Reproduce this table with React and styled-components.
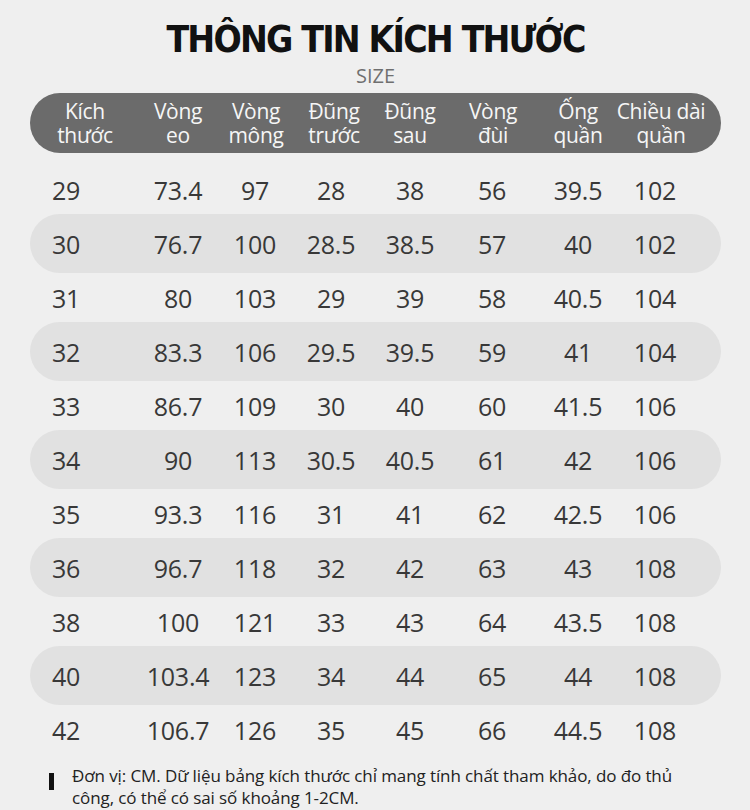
import React from "react";
import styled, { createGlobalStyle } from "styled-components";

const GlobalStyle = createGlobalStyle`
  html, body {
    margin: 0;
    padding: 0;
    background: #efefef;
  }
  body {
    font-family: "Open Sans", "Noto Sans", sans-serif;
    color: #333;
  }
`;

const HEAD_COLS = "93px 78px 78px 76px 83px 85px 83px 60px";
const BODY_COLS = "112px 77px 76px 79px 82px 86px 77px 66px";

const headers = [
  ["Kích", "thước"],
  ["Vòng", "eo"],
  ["Vòng", "mông"],
  ["Đũng", "trước"],
  ["Đũng", "sau"],
  ["Vòng", "đùi"],
  ["Ống", "quần"],
  ["Chiều dài", "quần"],
];

const rows = [
  ["29", "73.4", "97", "28", "38", "56", "39.5", "102"],
  ["30", "76.7", "100", "28.5", "38.5", "57", "40", "102"],
  ["31", "80", "103", "29", "39", "58", "40.5", "104"],
  ["32", "83.3", "106", "29.5", "39.5", "59", "41", "104"],
  ["33", "86.7", "109", "30", "40", "60", "41.5", "106"],
  ["34", "90", "113", "30.5", "40.5", "61", "42", "106"],
  ["35", "93.3", "116", "31", "41", "62", "42.5", "106"],
  ["36", "96.7", "118", "32", "42", "63", "43", "108"],
  ["38", "100", "121", "33", "43", "64", "43.5", "108"],
  ["40", "103.4", "123", "34", "44", "65", "44", "108"],
  ["42", "106.7", "126", "35", "45", "66", "44.5", "108"],
];

const Page = styled.div`
  width: 750px;
  height: 810px;
  box-sizing: border-box;
  padding: 18px 29px 0 30px;
  display: flex;
  flex-direction: column;
`;

const Title = styled.h1`
  margin: 0;
  text-align: center;
  font-family: "DejaVu Sans Condensed", "DejaVu Sans", sans-serif;
  font-stretch: condensed;
  font-weight: 700;
  font-size: 37px;
  line-height: 44px;
  color: #111;
  letter-spacing: -1.8px;
`;

const SubTitle = styled.div`
  margin-top: 2px;
  text-align: center;
  font-size: 20px;
  line-height: 24px;
  color: #6f6f6f;
`;

const HeaderBar = styled.div`
  margin-top: 5px;
  height: 60px;
  border-radius: 30px;
  background: #6b6b6b;
  display: grid;
  grid-template-columns: ${HEAD_COLS};
  padding-left: 55px;
  align-items: center;
`;

const Row = styled.div`
  display: grid;
  grid-template-columns: ${BODY_COLS};
  padding-left: 36px;
  align-items: center;
  height: ${(p) => (p.$shaded ? "59px" : "54px")};
  margin: ${(p) => (p.$shaded ? "-3px 0 -2px" : "0")};
  border-radius: 30px;
  background: ${(p) => (p.$shaded ? "#e1e1e1" : "transparent")};
`;

const Body = styled.div`
  margin-top: 10px;
  display: flex;
  flex-direction: column;
`;

const HeadCell = styled.div`
  justify-self: start;
  transform: translateX(-50%);
  white-space: nowrap;
  text-align: center;
  color: #f6f6f6;
  font-size: 21px;
  line-height: 24px;
  letter-spacing: -0.3px;
`;

const Cell = styled.div`
  justify-self: start;
  transform: translateX(-50%);
  white-space: nowrap;
  font-size: 25px;
  line-height: 30px;
  color: #383838;
  letter-spacing: -0.2px;
`;

const Note = styled.div`
  margin-top: 8px;
  display: flex;
  align-items: flex-start;
  gap: 18px;
  padding-left: 19px;
`;

const NoteMark = styled.span`
  flex: none;
  width: 5px;
  height: 17px;
  margin-top: 8px;
  background: #111;
`;

const NoteText = styled.p`
  margin: 0;
  font-size: 17px;
  line-height: 22px;
  color: #222;
  letter-spacing: -0.1px;
`;

export default function App() {
  return (
    <>
      <GlobalStyle />
      <Page>
        <Title>THÔNG TIN KÍCH THƯỚC</Title>
        <SubTitle>SIZE</SubTitle>
        <HeaderBar>
          {headers.map(([a, b]) => (
            <HeadCell key={a + b}>
              {a}
              <br />
              {b}
            </HeadCell>
          ))}
        </HeaderBar>
        <Body>
          {rows.map((r, i) => (
            <Row key={r[0]} $shaded={i % 2 === 1}>
              {r.map((v, j) => (
                <Cell key={j}>{v}</Cell>
              ))}
            </Row>
          ))}
        </Body>
        <Note>
          <NoteMark />
          <NoteText>
            Đơn vị: CM. Dữ liệu bảng kích thước chỉ mang tính chất tham khảo, do đo thủ
            <br />
            công, có thể có sai số khoảng 1-2CM.
          </NoteText>
        </Note>
      </Page>
    </>
  );
}
